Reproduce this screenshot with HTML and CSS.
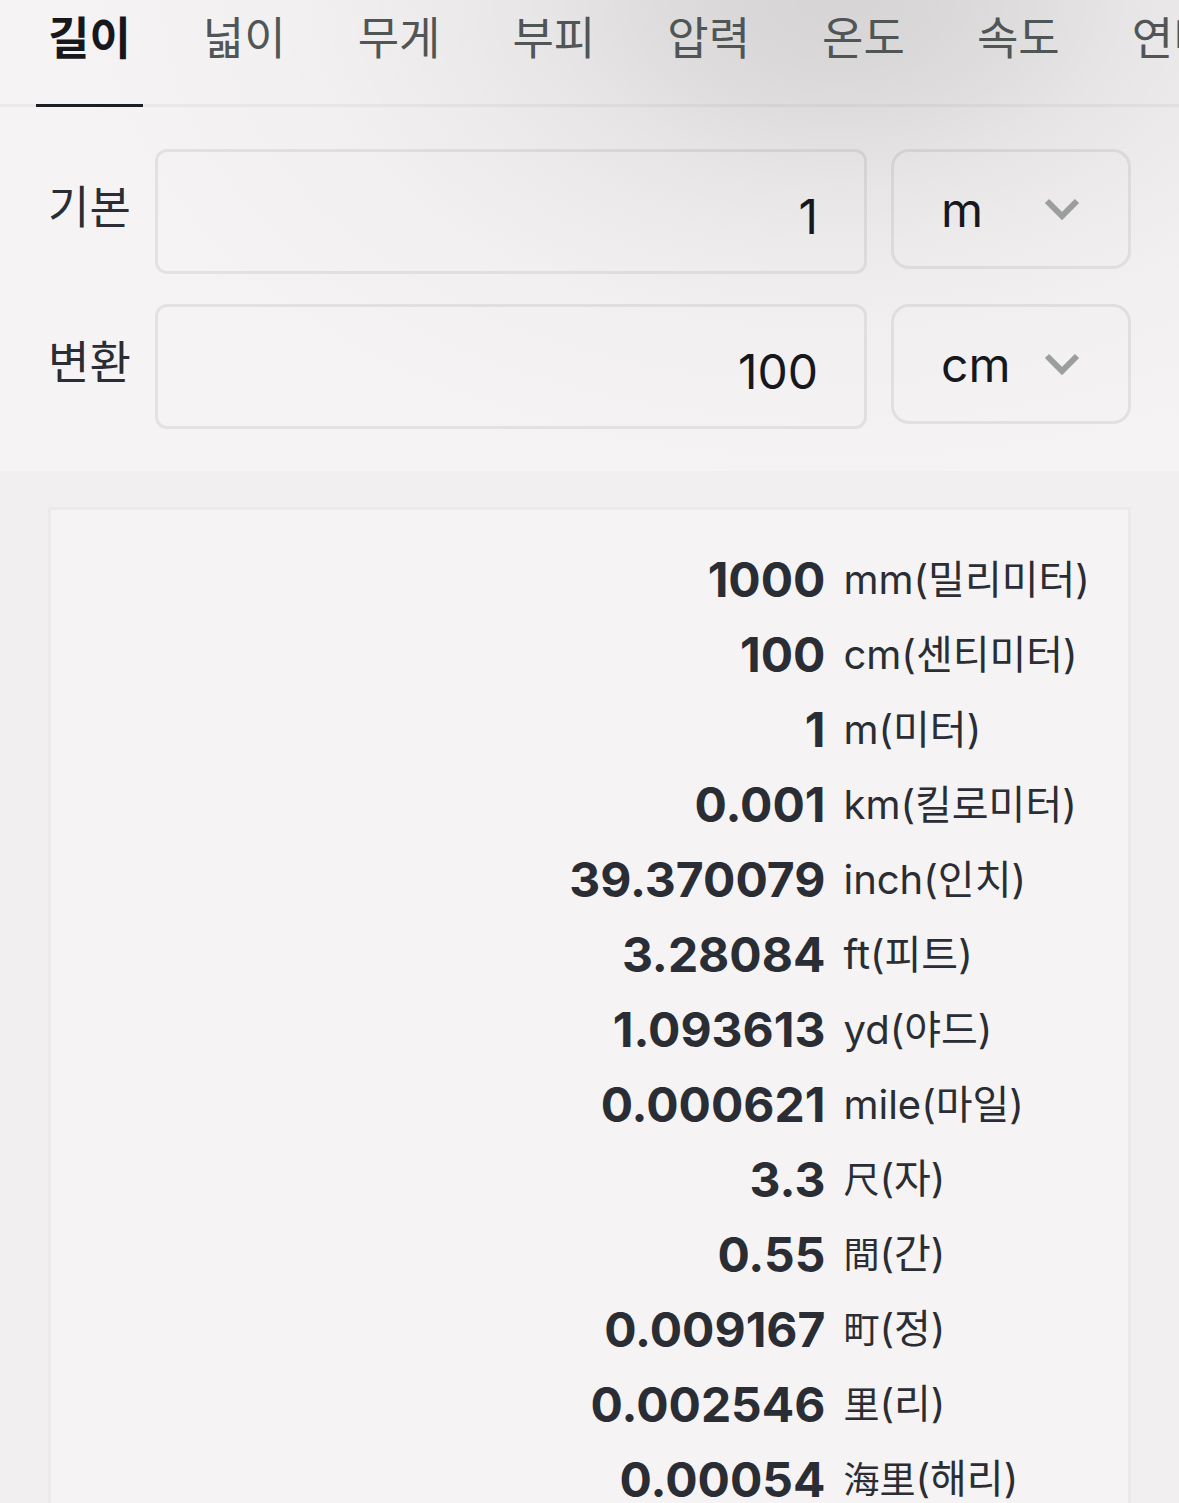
FILE: index.html
```html
<!DOCTYPE html>
<html lang="ko">
<head>
<meta charset="utf-8">
<meta name="viewport" content="width=device-width, initial-scale=1">
<title>단위 변환</title>
<link rel="stylesheet" href="styles.css">
</head>
<body>
<main class="page">
  <section class="converter">
    <nav class="tabs" aria-label="단위 종류">
      <button class="tab tab-active" type="button" aria-current="true">길이</button>
      <button class="tab" type="button">넓이</button>
      <button class="tab" type="button">무게</button>
      <button class="tab" type="button">부피</button>
      <button class="tab" type="button">압력</button>
      <button class="tab" type="button">온도</button>
      <button class="tab" type="button">속도</button>
      <button class="tab" type="button">연비</button>
    </nav>
    <form class="form">
      <div class="field">
        <label class="label" for="from">기본</label>
        <input class="value" id="from" type="text" inputmode="decimal" value="1">
        <div class="picker">
          <select class="unit-select" aria-label="기본 단위"><option>m</option><option>cm</option></select>
          <svg class="chevron" viewBox="0 0 36 24" aria-hidden="true"><path d="M3 4 L18 19 L33 4"/></svg>
        </div>
      </div>
      <div class="field">
        <label class="label" for="to">변환</label>
        <input class="value" id="to" type="text" inputmode="decimal" value="100">
        <div class="picker">
          <select class="unit-select" aria-label="변환 단위"><option>cm</option><option>m</option></select>
          <svg class="chevron" viewBox="0 0 36 24" aria-hidden="true"><path d="M3 4 L18 19 L33 4"/></svg>
        </div>
      </div>
    </form>
  </section>
  <section class="results">
    <div class="card">
      <table class="table">
        <tbody>
          <tr><td class="amount">1000</td><th class="unit" scope="row">mm(밀리미터)</th></tr>
          <tr><td class="amount">100</td><th class="unit" scope="row">cm(센티미터)</th></tr>
          <tr><td class="amount">1</td><th class="unit" scope="row">m(미터)</th></tr>
          <tr><td class="amount">0.001</td><th class="unit" scope="row">km(킬로미터)</th></tr>
          <tr><td class="amount">39.370079</td><th class="unit" scope="row">inch(인치)</th></tr>
          <tr><td class="amount">3.28084</td><th class="unit" scope="row">ft(피트)</th></tr>
          <tr><td class="amount">1.093613</td><th class="unit" scope="row">yd(야드)</th></tr>
          <tr><td class="amount">0.000621</td><th class="unit" scope="row">mile(마일)</th></tr>
          <tr><td class="amount">3.3</td><th class="unit" scope="row"><span class="hanja">尺</span>(자)</th></tr>
          <tr><td class="amount">0.55</td><th class="unit" scope="row"><span class="hanja">間</span>(간)</th></tr>
          <tr><td class="amount">0.009167</td><th class="unit" scope="row"><span class="hanja">町</span>(정)</th></tr>
          <tr><td class="amount">0.002546</td><th class="unit" scope="row"><span class="hanja">里</span>(리)</th></tr>
          <tr><td class="amount">0.00054</td><th class="unit" scope="row"><span class="hanja">海里</span>(해리)</th></tr>
        </tbody>
      </table>
    </div>
  </section>
</main>
</body>
</html>
```
FILE: styles.css
```css
* {
  box-sizing: border-box;
}

body {
  margin: 0;
  background: #f1eff0;
  color: #2a2d33;
  font-family: Inter, "Noto Sans CJK KR", sans-serif;
}

.page {
  height: 100vh;
  overflow: hidden;
}

.converter {
  background:
    radial-gradient(ellipse 800px 500px at 71% 0,
      rgba(0, 0, 0, 0.125) 0%,
      rgba(0, 0, 0, 0.115) 12%,
      rgba(0, 0, 0, 0.09) 24%,
      rgba(0, 0, 0, 0.06) 36%,
      rgba(0, 0, 0, 0.035) 50%,
      rgba(0, 0, 0, 0.016) 66%,
      rgba(0, 0, 0, 0.006) 82%,
      rgba(0, 0, 0, 0) 100%),
    #f5f3f4;
}

.tabs {
  display: flex;
  gap: 48px;
  padding-left: 36px;
  overflow: hidden;
  box-shadow: inset 0 -3px rgba(0, 0, 0, 0.04);
}

.tab {
  flex: none;
  height: 107px;
  padding: 0 12px 26px;
  border: 0;
  border-bottom: 3px solid transparent;
  background: none;
  color: #505556;
  font: 400 45px/66px Inter, "Noto Sans CJK KR", sans-serif;
}

.tab-active {
  border-color: #1b1e22;
  color: #17181d;
  font-weight: 700;
}

.form {
  display: flex;
  flex-direction: column;
  gap: 30px;
  padding: 42px 48px;
}

.field {
  display: flex;
  align-items: flex-start;
  gap: 24px;
}

.label {
  flex: none;
  padding-top: 26px;
  font-size: 45px;
  line-height: 66px;
}

.value {
  flex: 1;
  min-width: 0;
  height: 125px;
  padding: 9px 46px 0;
  border: 3px solid rgba(0, 0, 0, 0.07);
  border-radius: 12px;
  background: none;
  color: #17181d;
  font: 400 48px/60px Inter, "Noto Sans CJK KR", sans-serif;
  text-align: right;
}

.picker {
  position: relative;
  flex: none;
  width: 240px;
}

.unit-select {
  display: block;
  width: 100%;
  height: 120px;
  padding: 2px 84px 0 47px;
  border: 3px solid rgba(0, 0, 0, 0.07);
  border-radius: 18px;
  appearance: none;
  background: none;
  color: #17181d;
  font: 400 48px/60px Inter, "Noto Sans CJK KR", sans-serif;
}

.chevron {
  position: absolute;
  top: 48px;
  right: 51px;
  width: 36px;
  height: 24px;
  fill: none;
  stroke: #9c9e9e;
  stroke-width: 6;
  pointer-events: none;
}

.results {
  padding: 36px 48px;
}

.card {
  padding: 32px 0;
  border: 3px solid #ebe9ea;
  background: #f5f3f4;
}

.table {
  width: 100%;
  border-collapse: collapse;
  table-layout: fixed;
}

.table td,
.table th {
  height: 75px;
  padding: 0;
  line-height: 60px;
  white-space: nowrap;
}

.table .amount {
  width: 72%;
  padding-right: 1px;
  font-size: 48px;
  font-weight: 700;
  text-align: right;
}

.table .unit {
  padding-left: 17px;
  font-size: 40px;
  font-weight: 400;
  text-align: left;
}

.hanja {
  font-size: 36px;
}
```
